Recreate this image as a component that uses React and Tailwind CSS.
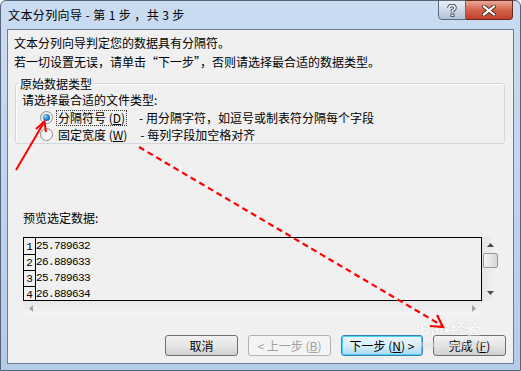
const rows = ["25.789632", "26.889633", "25.789633", "26.889634"];

function Radio({ checked }) {
  return (
    <span className="relative flex h-[13px] w-[13px] items-center justify-center rounded-full border border-[#8e8f8f] bg-gradient-to-br from-[#e0e0e0] via-[#f4f4f4] to-white">
      {checked && (
        <span className="h-[7px] w-[7px] rounded-full bg-[radial-gradient(circle_at_35%_35%,#9ad3f8,#1c79c6_55%,#0c4f8f)]" />
      )}
    </span>
  );
}

function WinButton({ children, width, disabled, focused }) {
  let cls = "border-[#707070] bg-gradient-to-b from-[#f2f2f2] via-[#e6e6e6] to-[#d0d0d0] text-black";
  if (disabled) cls = "border-[#adb2b5] bg-[#f4f4f4] text-[#a0a0a0]";
  if (focused) cls = "border-[#3c7fb1] bg-gradient-to-b from-[#eaf6fd] via-[#d9f0fc] to-[#a7d9f5] text-black shadow-[inset_0_0_0_1px_#48d4fc]";
  return (
    <div className={`flex h-[21px] items-center justify-center rounded-[3px] border text-[12px] ${cls}`} style={{ width }}>
      {children}
    </div>
  );
}

export default function App() {
  return (
    <div className="relative h-[371px] w-[521px] overflow-hidden bg-white font-['Noto_Sans_CJK_SC',sans-serif] text-[12px] text-black">
      <div className="flex h-full flex-col rounded-t-[6px] border border-[#566578] bg-gradient-to-b from-[#c9dcf1] via-[#bfd5ee] to-[#b4cce8] px-[6px] pb-[6px]">
        {/* title bar */}
        <div className="flex h-[28px] items-start justify-between">
          <div className="flex h-[28px] items-center pl-[1px] text-[12px] leading-none tracking-[0.4px] text-black">
            文本分列向导 - 第 1 步 ，共 3 步
          </div>
          <div className="-mt-[1px] mr-[1px] flex">
            <div className="flex h-[20px] w-[28px] items-center justify-center rounded-bl-[4px] border border-[#5a6a80] bg-gradient-to-b from-[#e6edf5] via-[#cfdae7] to-[#b3c3d6]">
              <svg width="10" height="13" viewBox="0 0 10 13">
                <path d="M2 4 Q2 1.5 5 1.5 Q8 1.5 8 4 Q8 5.5 5.5 6.5 L5.5 8.5" fill="none" stroke="#3a4658" strokeWidth="3.4" />
                <path d="M2 4 Q2 1.5 5 1.5 Q8 1.5 8 4 Q8 5.5 5.5 6.5 L5.5 8.5" fill="none" stroke="#fff" strokeWidth="1.6" />
                <rect x="4" y="10" width="3" height="2.6" fill="#fff" stroke="#3a4658" strokeWidth="0.9" />
              </svg>
            </div>
            <div className="flex h-[20px] w-[47px] items-center justify-center rounded-br-[4px] border border-l-0 border-[#6b2a20] bg-gradient-to-b from-[#e9a899] via-[#d4614a] to-[#c2402a]">
              <svg width="14" height="11" viewBox="0 0 14 11">
                <path d="M2 1.5 L12 9.5 M12 1.5 L2 9.5" stroke="#4a2a24" strokeWidth="4" strokeLinecap="square" />
                <path d="M2 1.5 L12 9.5 M12 1.5 L2 9.5" stroke="#fff" strokeWidth="2.2" strokeLinecap="square" />
              </svg>
            </div>
          </div>
        </div>

        {/* client */}
        <div className="flex flex-1 flex-col border border-[#6f7d8c] bg-[#f0f0f0]">
          <div className="pl-[6px] pt-[3px] leading-[19px]">
            <div>文本分列向导判定您的数据具有分隔符。</div>
            <div>若一切设置无误，请单击“下一步”，否则请选择最合适的数据类型。</div>
          </div>

          <fieldset className="ml-[7px] mt-[3px] h-[70px] w-[490px] rounded-[3px] border border-[#d3d8dc] pl-[2px] shadow-[inset_1px_1px_0_#fff]">
            <legend className="px-[2px] leading-[19px]">原始数据类型</legend>
            <div className="-mt-[2px] pl-[4px] leading-[18px]">请选择最合适的文件类型:</div>
            <div className="flex h-[17px] items-center pl-[22px]">
              <Radio checked />
              <span className="ml-[3px] border border-dotted border-[#333] px-[1px] leading-[14px]">
                分隔符号 (<u>D</u>)
              </span>
              <span className="ml-[12px]">- 用分隔字符，如逗号或制表符分隔每个字段</span>
            </div>
            <div className="flex h-[17px] items-center pl-[22px]">
              <Radio />
              <span className="ml-[4px] px-[1px]">
                固定宽度 (<u>W</u>)
              </span>
              <span className="ml-[12px]">- 每列字段加空格对齐</span>
            </div>
          </fieldset>

          <div className="mt-[64px] pl-[15px] leading-[19px]">预览选定数据:</div>

          <div className="ml-[15px] mt-[10px] flex w-[475px] flex-col">
            <div className="flex">
              <div className="h-[64px] w-[459px] overflow-hidden border border-black bg-[#f0f0f0]">
                {rows.map((r, i) => (
                  <div key={r + i} className="flex h-[16px]">
                    <div className={`flex w-[12px] items-end justify-center border-r border-black font-['Liberation_Mono',monospace] text-[11px] leading-[14px] ${i > 0 ? "border-t" : ""}`}>
                      {i + 1}
                    </div>
                    <div className="flex items-center font-['Liberation_Mono',monospace] text-[11px] tracking-[-0.6px]">{r}</div>
                  </div>
                ))}
              </div>
              <div className="flex h-[64px] w-[16px] flex-col items-center bg-gradient-to-r from-[#e6e6e6] to-[#f3f3f3]">
                <svg className="mt-[6px]" width="7" height="4" viewBox="0 0 7 4">
                  <path d="M0 4 L3.5 0 L7 4 Z" fill="#4a4a4a" />
                </svg>
                <div className="mt-[6px] h-[15px] w-[15px] rounded-[2px] border border-[#959595] bg-gradient-to-r from-[#f4f4f4] via-[#e6e6e6] to-[#d8d8d8]" />
                <svg className="mt-auto mb-[6px]" width="7" height="4" viewBox="0 0 7 4">
                  <path d="M0 0 L7 0 L3.5 4 Z" fill="#4a4a4a" />
                </svg>
              </div>
            </div>
            <div className="flex">
              <div className="flex h-[14px] w-[459px] items-center justify-between bg-gradient-to-b from-[#e8e8e8] to-[#f4f4f4] px-[6px]">
                <svg width="4" height="7" viewBox="0 0 4 7">
                  <path d="M4 0 L0 3.5 L4 7 Z" fill="#a3a3a3" />
                </svg>
                <svg width="4" height="7" viewBox="0 0 4 7">
                  <path d="M0 0 L4 3.5 L0 7 Z" fill="#a3a3a3" />
                </svg>
              </div>
              <div className="h-[14px] w-[16px] bg-[#f0f0f0]" />
            </div>
          </div>

          <div className="mt-[20px] flex justify-end gap-[10px] pr-[7px]">
            <WinButton width={73}>取消</WinButton>
            <WinButton width={83} disabled>
              &lt; 上一步 (<u>B</u>)
            </WinButton>
            <WinButton width={82} focused>
              下一步 (<u>N</u>) &gt;
            </WinButton>
            <WinButton width={73}>
              完成 (<u>F</u>)
            </WinButton>
          </div>
        </div>
      </div>

      {/* watermark */}
      <div className="pointer-events-none absolute left-[414px] top-[320px] flex flex-col items-center text-white opacity-60 [text-shadow:0_0_1px_#9a9a9a]">
        <div className="font-['Liberation_Sans',sans-serif] text-[15px] font-bold leading-[18px]">
          Bai<span className="text-[12px]">●</span>经验
        </div>
        <div className="font-['Liberation_Sans',sans-serif] text-[9px] leading-[11px]">jingyan.baidu.com</div>
      </div>

      {/* red annotations */}
      <svg className="pointer-events-none absolute inset-0" width="521" height="371" viewBox="0 0 521 371">
        <path d="M16 170 L44.5 121.5" stroke="#ff0000" strokeWidth="2" fill="none" />
        <path d="M36 129 L44.5 121.5 L46 132" stroke="#ff0000" strokeWidth="2" fill="none" />
        <path d="M139 147 L441 325" stroke="#ff0000" strokeWidth="2.2" strokeDasharray="6 4" fill="none" />
        <path d="M430 326 L443 327 L437 315" stroke="#ff0000" strokeWidth="2.2" fill="none" />
      </svg>
    </div>
  );
}
